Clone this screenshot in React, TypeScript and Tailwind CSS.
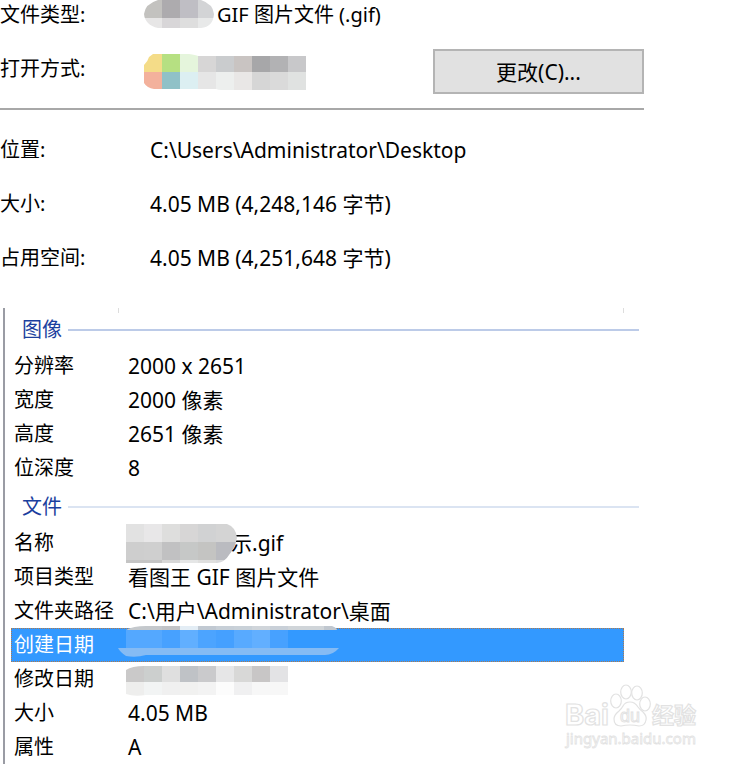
import type { ReactNode } from "react";

interface MosaicRow {
    x?: number;
    y: number;
    h: number;
    colors: string[];
}

interface MosaicProps {
    id: string;
    width: number;
    height: number;
    outline: string;
    rows: MosaicRow[];
    className?: string;
}

// Pixelated cover over private text, 18px blocks clipped to a brush outline
function Mosaic({ id, width, height, outline, rows, className = "" }: MosaicProps) {
    return (
        <svg
            width={width}
            height={height}
            viewBox={`0 0 ${width} ${height}`}
            shapeRendering="crispEdges"
            aria-hidden="true"
            className={`shrink-0 ${className}`}
        >
            <clipPath id={id}>
                <path d={outline} />
            </clipPath>
            <g clipPath={`url(#${id})`}>
                {rows.map((row) =>
                    row.colors.map((color, i) => (
                        <rect
                            key={`${row.y}-${i}`}
                            x={(row.x ?? 0) + i * 18}
                            y={row.y}
                            width={18}
                            height={row.h}
                            fill={color}
                        />
                    ))
                )}
            </g>
        </svg>
    );
}

interface Property {
    label: string;
    value: ReactNode;
    selected?: boolean;
}

const general: Property[] = [
    { label: "位置:", value: "C:\\Users\\Administrator\\Desktop" },
    { label: "大小:", value: "4.05 MB (4,248,146 字节)" },
    { label: "占用空间:", value: "4.05 MB (4,251,648 字节)" },
];

const imageDetails: Property[] = [
    { label: "分辨率", value: "2000 x 2651" },
    { label: "宽度", value: "2000 像素" },
    { label: "高度", value: "2651 像素" },
    { label: "位深度", value: "8" },
];

const fileDetails: Property[] = [
    {
        label: "名称",
        value: (
            <span className="-ml-[2px] flex items-center">
                <Mosaic
                    id="name"
                    width={111}
                    height={39}
                    className="relative z-10"
                    outline="M0 0H101Q110 3 111 14Q109 24 103 31Q99 38 91 39H18Q8 39 0 39Z"
                    rows={[
                        { y: 0, h: 18, colors: ["#e2e2e2", "#e8e7e8", "#dededd", "#d7d6d6", "#d1d2d3", "#d4d4d4", "#d4d4d4"] },
                        { y: 18, h: 18, colors: ["#cecece", "#cfcfcf", "#c1c1c2", "#c6c8c7", "#c4c4c2", "#babbc0", "#babbc0"] },
                        { y: 36, h: 3, colors: ["#c4c4c4", "#c4c4c4", "#d7d7d7", "#e5e6e6", "#dfdfde", "#d9dadc"] },
                    ]}
                />
                <span className="-ml-[6px]">示.gif</span>
            </span>
        ),
    },
    { label: "项目类型", value: "看图王 GIF 图片文件" },
    { label: "文件夹路径", value: "C:\\用户\\Administrator\\桌面" },
    {
        label: "创建日期",
        selected: true,
        value: (
            <Mosaic
                id="created"
                width={221}
                height={31}
                className="absolute -top-[3px] -left-[10px]"
                outline="M8 4Q15 0 28 0H214Q219 2 219 4V22H221Q215 29 207 29H28Q18 32 8 30Q2 26 0 22H8Z"
                rows={[
                    { x: 8, y: 0, h: 4, colors: ["#c4c8cc", "#c4c8cc", "#c1c3c6", "#e3edf5", "#c1c9d2", "#c7cfd7", "#c9d1d8", "#d0d5da", "#c9d0d8", "#d0d5d9", "#d0d5d9", "#c0c7cf"] },
                    { x: 8, y: 4, h: 18, colors: ["#54a8ff", "#54a8ff", "#47a1ff", "#61afff", "#4ca4ff", "#45a0ff", "#58aaff", "#62afff", "#47a1ff"] },
                    { y: 22, h: 9, colors: Array(13).fill("#85bbf4") },
                ]}
            />
        ),
    },
    {
        label: "修改日期",
        value: (
            <Mosaic
                id="modified"
                width={162}
                height={30}
                className="-ml-[2px] self-end"
                outline="M0 4Q6 0 18 0H162V29H20Q8 31 0 28Z"
                rows={[
                    { y: 0, h: 16, colors: ["#cac9c9", "#cccfce", "#dfdfdf", "#bfc2c6", "#cacacc", "#e6e6e7", "#d8d8d7", "#c8c6c6", "#e3e3e5"] },
                    { y: 16, h: 14, colors: ["#eeeeed", "#f2f4f4", "#f0f0f0", "#f1f1f0", "#f3f3f3", "#fcfcfc", "#f0f0f1", "#f7f7f7", "#f7f7f7"] },
                ]}
            />
        ),
    },
    { label: "大小", value: "4.05 MB" },
    { label: "属性", value: "A" },
];

function DetailSection({ title, items }: { title: string; items: Property[] }) {
    return (
        <section className="pt-[6px]">
            <div className="mb-[3px] flex h-8 items-center gap-[6px] pl-[17px] text-[#1b3f9e]">
                <h2>{title}</h2>
                <div
                    className={`h-[2px] flex-1 ${title === "图像" ? "bg-[#bccbe8]" : "bg-[#dbe4f2]"}`}
                />
            </div>

            <dl className="mr-[15px] ml-[6px]">
                {items.map((item) => (
                    <div
                        key={item.label}
                        className={`flex h-[34px] items-center ${
                            item.selected
                                ? "border border-dotted border-[#b07a4a] bg-[#3399ff] pl-[2px] text-white"
                                : "pl-[3px]"
                        }`}
                    >
                        <dt className="w-[114px] shrink-0">{item.label}</dt>
                        <dd className="relative flex h-full items-center text-[21px]">{item.value}</dd>
                    </div>
                ))}
            </dl>
        </section>
    );
}

function Watermark() {
    return (
        <svg
            width="140"
            height="68"
            viewBox="0 0 140 68"
            aria-label="Baidu 经验"
            className="absolute right-[36px] bottom-[12px]"
            fill="#ffffff"
            stroke="#e2e2e2"
            strokeWidth="1.2"
        >
            <text x="3" y="41" fontSize="29" fontFamily="Inter, sans-serif" fontWeight="bold">
                Bai
            </text>
            <text x="90" y="39" fontSize="22" fontFamily="Noto Sans CJK SC, sans-serif" fontWeight="bold">
                经验
            </text>
            <ellipse cx="54" cy="17" rx="5.3" ry="7" />
            <ellipse cx="64" cy="8" rx="5.3" ry="7" />
            <ellipse cx="75" cy="9" rx="5.3" ry="7" />
            <ellipse cx="83" cy="20" rx="5.3" ry="7" />
            <path d="M68 18Q73 18 76 23Q78 26 81 28Q85 32 84 36Q83 42 77 42Q68 40 59 42Q52 42 52 35Q52 31 57 27Q60 24 61 22Q63 18 68 18Z" />
            <text x="58" y="38" fontSize="18" fontFamily="Liberation Sans, sans-serif" strokeWidth="1">
                du
            </text>
            <text x="4" y="60" fontSize="15" fontFamily="Noto Sans, sans-serif" strokeWidth="0.8">
                jingyan.baidu.com
            </text>
        </svg>
    );
}

export default function App() {
    return (
        <main className="relative min-h-screen overflow-hidden bg-white pr-[94px] font-['Noto_Sans','Noto_Sans_CJK_SC',sans-serif] text-[20px] leading-[30px] whitespace-nowrap text-black">
            {/* File type */}
            <div className="flex h-[30px]">
                <span className="w-36 shrink-0">文件类型:</span>
                <span className="flex items-center gap-[3px]">
                    <Mosaic
                        id="type"
                        width={70}
                        height={30}
                        outline="M14 0H57Q69 4 70 14Q69 27 57 28H14Q1 25 0 14Q1 4 14 0Z"
                        rows={[
                            { y: 0, h: 18, colors: ["#c3c2bf", "#adabae", "#bfbec4", "#d3d4d6"] },
                            { y: 18, h: 12, colors: ["#e7e6e6", "#d8d6d8", "#dedede", "#e8e9e9"] },
                        ]}
                    />
                    GIF 图片文件 (.gif)
                </span>
            </div>

            {/* Opens with */}
            <div className="mt-[19px] flex h-[45px]">
                <span className="w-36 shrink-0 leading-10">打开方式:</span>
                <Mosaic
                    id="opener"
                    width={162}
                    height={36}
                    className="self-center"
                    outline="M9 0H45Q52 1 54 2H162V36H78Q74 36 72 35H10Q3 34 0 29V11Q4 7 5 3Z"
                    rows={[
                        { y: 0, h: 18, colors: ["#f4dc88", "#b6e082", "#e5f5dc", "#d7d6d6", "#caccce", "#c9c4c2", "#a7a7a9", "#b2b2b4", "#c8c8ca"] },
                        { y: 18, h: 18, colors: ["#f3b19c", "#90c1c7", "#dceff2", "#e6e6e6", "#edefee", "#e9e7e6", "#d6d6d6", "#dadada", "#e0e2e1"] },
                    ]}
                />
                <button
                    type="button"
                    className="ml-auto w-[211px] border-2 border-[#b4b4b4] bg-[#e1e1e1] text-[21px]"
                >
                    更改(C)...
                </button>
            </div>

            <hr className="mt-[14px] mb-[13px] border-t-2 border-[#a8a8a8]" />

            {/* Location and size */}
            <dl>
                {general.map((item) => (
                    <div key={item.label} className="flex h-[54px] items-center">
                        <dt className="w-[150px] shrink-0">{item.label}</dt>
                        <dd className="text-[21px]">{item.value}</dd>
                    </div>
                ))}
            </dl>

            {/* Details list */}
            <div className="relative mt-[23px] mr-[5px] ml-[3px] border-l-2 border-[#9a9ca4]">
                <div className="absolute top-0 right-[15px] left-[113px] h-[5px] border-x border-[#dddddd]" />
                <DetailSection title="图像" items={imageDetails} />
                <DetailSection title="文件" items={fileDetails} />
            </div>

            <Watermark />
        </main>
    );
}
